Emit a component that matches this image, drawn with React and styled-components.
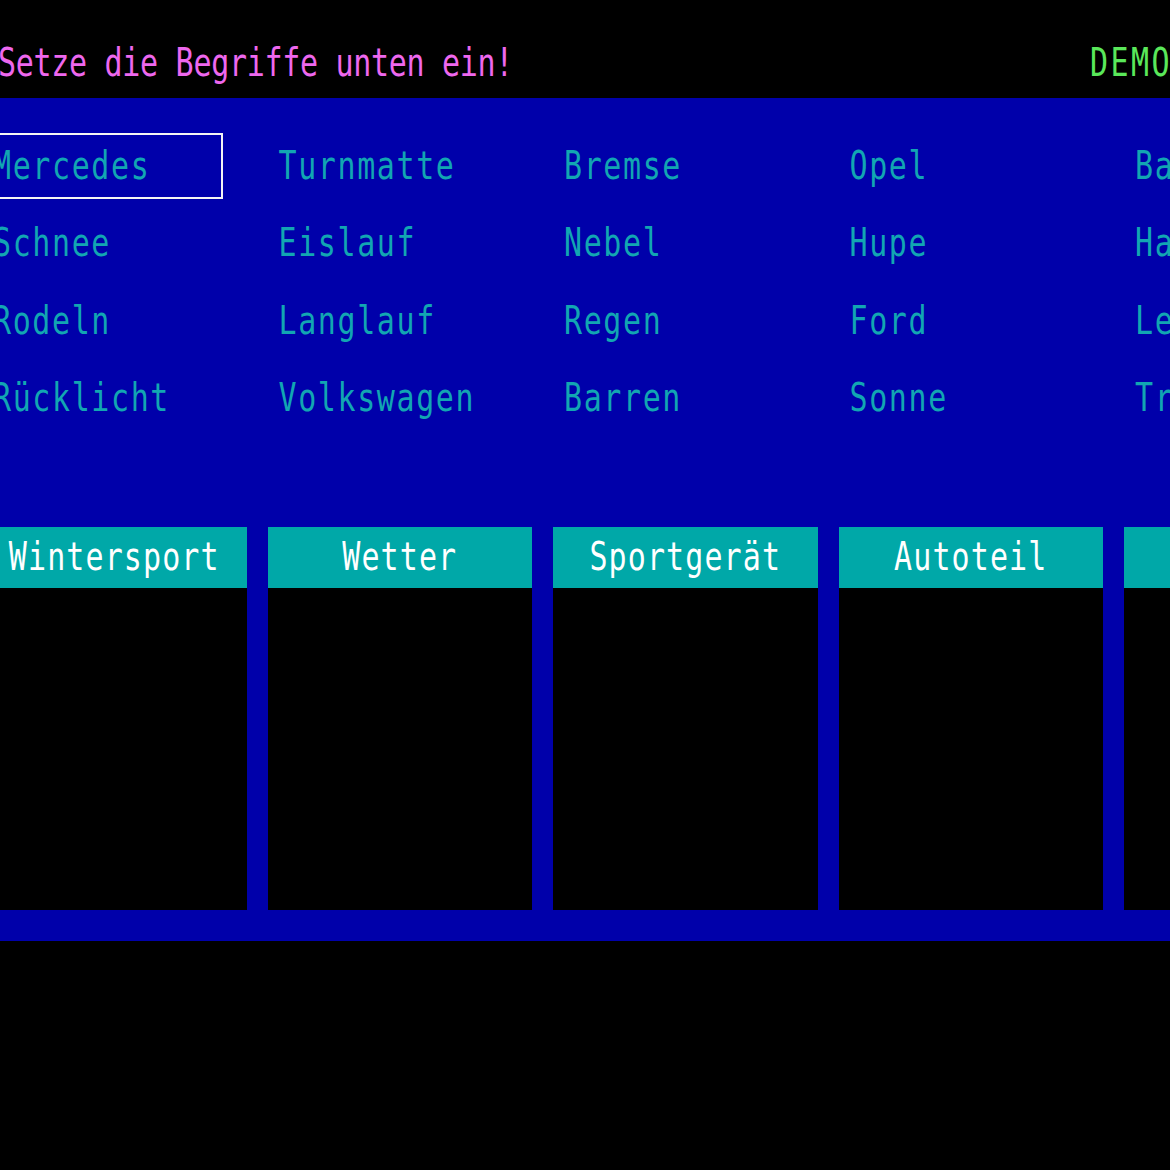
import React from 'react';
import styled, { createGlobalStyle } from 'styled-components';

const GlobalStyle = createGlobalStyle`
    html, body {
        margin: 0;
        padding: 0;
        background: #000000;
        overflow: hidden;
    }

    #root {
        width: 1170px;
        height: 1170px;
        overflow: hidden;
        background: #000000;
    }
`;

const columns = [
    ['Mercedes', 'Schnee', 'Rodeln', 'Rücklicht'],
    ['Turnmatte', 'Eislauf', 'Langlauf', 'Volkswagen'],
    ['Bremse', 'Nebel', 'Regen', 'Barren'],
    ['Opel', 'Hupe', 'Ford', 'Sonne'],
    ['Batterie', 'Hagel', 'Lenkrad', 'Trampolin'],
];

const categories = ['Wintersport', 'Wetter', 'Sportgerät', 'Autoteil', 'Automarke'];

const selectedWord = 'Mercedes';

const App = () => (
    <>
        <GlobalStyle />
        <Screen>
            <TopBar>
                <Title>
                    <Glyphs>Setze die Begriffe unten ein!</Glyphs>
                </Title>
                <Demo>
                    <Glyphs>DEMO</Glyphs>
                </Demo>
            </TopBar>

            <Panel>
                <WordGrid>
                    {columns.flat().map(word => (
                        <Word key={word} selected={word === selectedWord}>
                            <Glyphs>{word}</Glyphs>
                        </Word>
                    ))}
                </WordGrid>

                <CategoryRow>
                    {categories.map(name => (
                        <Category key={name}>
                            <CategoryHeader>
                                <Glyphs>{name}</Glyphs>
                            </CategoryHeader>
                            <CategoryBody />
                        </Category>
                    ))}
                </CategoryRow>
            </Panel>
        </Screen>
    </>
);

export default App;

const Screen = styled.div`
    width: 1500px;
    margin-left: -18px;
    font-family: "DejaVu Sans Mono", "Liberation Mono", monospace;
    font-size: 30px;
    line-height: 30px;
`;

const Glyphs = styled.span`
    display: inline-block;
    white-space: pre;
    transform: scaleY(1.3);
    transform-origin: 50% 50%;
`;

const TopBar = styled.div`
    box-sizing: border-box;
    height: 98px;
    padding-top: 48px;
    display: grid;
    grid-template-columns: 1108px max-content;
    background: #000000;
`;

const Title = styled.div`
    padding-left: 16px;
    color: #ee68ee;
    letter-spacing: -0.3px;
`;

const Demo = styled.div`
    color: #5ae85a;
    letter-spacing: 2.4px;
`;

const Panel = styled.div`
    background: #0000aa;
    padding: 35px 0 31px;
`;

const WordGrid = styled.div`
    display: grid;
    grid-auto-flow: column;
    grid-template-rows: repeat(4, 66px);
    grid-template-columns: repeat(5, 264.5px);
    column-gap: 21px;
    row-gap: 11.67px;
    margin-bottom: 95px;
`;

const Word = styled.div`
    box-sizing: border-box;
    width: 241px;
    display: flex;
    align-items: center;
    padding: 0 0 1px 9px;
    border: 2px solid ${props => (props.selected ? '#f4f4f4' : 'transparent')};
    color: #12a6b2;
    letter-spacing: 1.6px;
`;

const CategoryRow = styled.div`
    display: grid;
    grid-template-columns: repeat(5, 264.5px);
    column-gap: 21px;
`;

const Category = styled.div`
    display: flex;
    flex-direction: column;
`;

const CategoryHeader = styled.div`
    height: 61px;
    display: flex;
    align-items: center;
    justify-content: center;
    background: #00a8a8;
    color: #ffffff;
    letter-spacing: 1.1px;
`;

const CategoryBody = styled.div`
    height: 322px;
    background: #000000;
`;
